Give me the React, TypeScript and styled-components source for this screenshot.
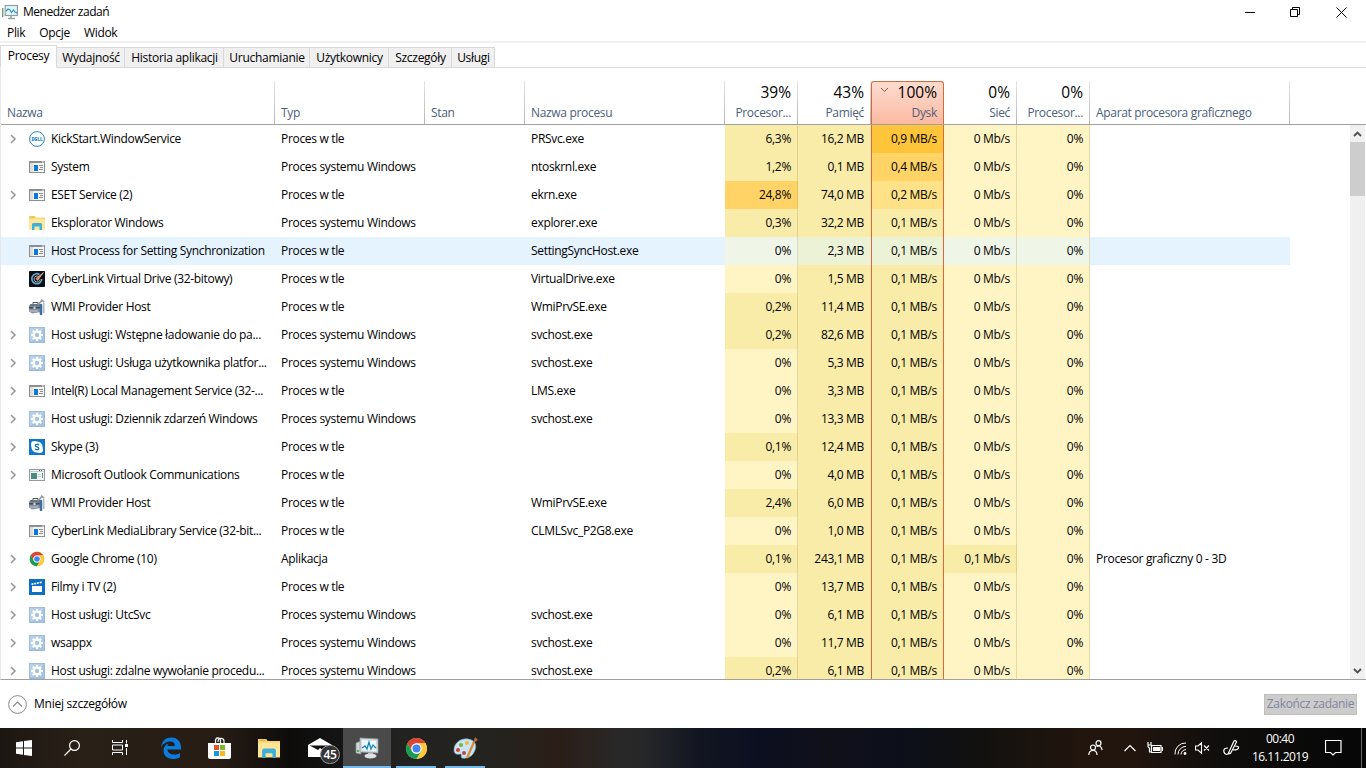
import React from 'react';
import styled, { createGlobalStyle, css } from 'styled-components';

const Global = createGlobalStyle`
  * { box-sizing: border-box; }
  html, body { margin: 0; padding: 0; }
  body {
    width: 1366px; height: 768px; overflow: hidden; background: #fff; color: #000;
    font: 12px/16px "Open Sans", "Noto Sans", sans-serif;
    letter-spacing: -0.32px;
  }
  svg { display: block; flex: none; }
`;

const Screen = styled.div`
  width: 1366px; height: 768px; display: flex; flex-direction: column; overflow: hidden;
`;
const TitleBar = styled.header`
  height: 24px; display: flex; align-items: center; padding-left: 2px;
`;
const Title = styled.span`margin-left: 5px; flex: 1; letter-spacing: -0.5px;`;
const WindowButton = styled.span`
  width: 46px; height: 21px; display: flex; align-items: center; justify-content: center;
  &:last-child { margin-right: 2px; }
`;
const MenuBar = styled.nav`
  height: 19px; display: flex; gap: 14px; padding: 1px 0 0 7px; border-bottom: 2px solid #f0f0f0;
`;
const Tabs = styled.div`
  height: 25px; display: flex; align-items: flex-end; padding-top: 2px;
  box-shadow: inset 0 -1px #dcdcdc; background: #fff;
`;
const Tab = styled.div<{ $w: number; $active?: boolean }>`
  width: ${p => p.$w}px; height: 21px; padding: 2px 0 0 1px; text-align: center; white-space: nowrap;
  background: #f0f0f0; border: 1px solid #d9d9d9; border-left: 0; letter-spacing: -0.28px;
  ${p => p.$active && css`
    height: 23px; background: #fff; border-left: 1px solid #d9d9d9; border-bottom-color: #fff; padding-left: 0;
  `}
`;
const Table = styled.section`
  height: 612px; display: flex; flex-direction: column; padding-left: 0;
  border-left: 1px solid #e8e8e8; border-bottom: 1px solid #a0a0a0;
`;
const COLUMNS = '274px 150px 100px 200px 73px 73px 73px 73px 73px 200px';
const Head = styled.div`
  height: 57px; flex: none; display: grid; grid-template-columns: ${COLUMNS};
  border-bottom: 1px solid #a0a0a0; padding-top: 13px;
`;
const HeadCell = styled.div<{ $num?: boolean; $hot?: boolean }>`
  position: relative; height: 43px; display: flex; flex-direction: column; justify-content: flex-end;
  padding: 0 6px 3px; color: #4c607a; text-align: ${p => (p.$num ? 'right' : 'left')};
  border-right: 1px solid; border-image: linear-gradient(#e6e6e6, #b4b4b4) 1;
  white-space: nowrap;
  ${p => p.$hot && css`
    background: linear-gradient(#fddcd0, #fcb9a1);
    border: 1px solid #d9683f; border-bottom: 0; border-image: none; border-radius: 3px 3px 0 0;
  `}
`;
const Total = styled.span`
  font-size: 15.5px; line-height: 20px; color: #000; margin-bottom: 3px; letter-spacing: 0;
`;
const SortMark = styled.svg`position: absolute; left: 8px; top: 5px;`;
const Body = styled.div`flex: 1; min-height: 0; display: flex; justify-content: space-between;`;
const Rows = styled.div`width: 1289px; overflow: hidden;`;
const Row = styled.div<{ $hover?: boolean }>`
  height: 28px; display: grid; grid-template-columns: ${COLUMNS};
  background: ${p => (p.$hover ? '#e5f3ff' : '#fff')};
`;
const Cell = styled.div`
  display: flex; align-items: center; padding: 0 6px; white-space: nowrap; overflow: hidden;
`;
const Chevron = styled.span`flex: none; width: 10px; height: 16px; display: flex; align-items: center; padding-left: 0;`;
const NameCell = styled(Cell)`padding-left: 8px; padding-right: 0;`;
const IconSlot = styled.span`flex: none; width: 16px; height: 16px; margin: 0 6px 0 10px;`;
const HEAT: Record<string, string> = {
  z: '#fff4c4', l: '#f9eca8', m: '#ffe187', h: '#ffd366', x: '#ffc53a', hz: '#eff5e7', hl: '#ecf2d5',
};
const Value = styled.div<{ $heat: string; $disk?: boolean; $flush?: boolean }>`
  display: flex; align-items: center; justify-content: flex-end; white-space: nowrap;
  padding-right: ${p => (p.$flush ? 7 : 6)}px; background-color: ${p => HEAT[p.$heat]};
  border-right: ${p => (p.$flush ? '0' : p.$disk ? '1px solid #d9683f' : '1px solid rgba(150,120,40,0.22)')};
  border-left: ${p => (p.$disk ? '1px solid #d9683f' : '0')};
`;
const ScrollBar = styled.div`
  width: 15px; height: 100%; background: #f0f0f0; margin-right: 1px;
  display: flex; flex-direction: column; align-items: center;
`;
const ScrollButton = styled.span`
  width: 15px; height: 17px; display: flex; align-items: center; justify-content: center;
`;
const Thumb = styled.span`width: 15px; height: 54px; background: #cdcdcd; margin-bottom: auto;`;
const Footer = styled.footer`
  height: 48px; display: flex; align-items: center; padding: 0 9px 0 8px; justify-content: space-between;
`;
const Fewer = styled.span`display: flex; align-items: center; gap: 7px; letter-spacing: -0.25px;`;
const EndTask = styled.button`
  width: 93px; height: 21px; padding: 0 0 1px; background: #ccc; border: 1px solid #bfbfbf; color: #838699;
  font: inherit; letter-spacing: -0.33px; white-space: nowrap;
`;
const TaskBar = styled.div`
  height: 40px; display: flex; align-items: stretch; color: #fff;
  background: linear-gradient(90deg, #1d1713 0, #292017 80px, #261c14 220px, #0d0c0b 290px, #151515 340px,
    #222221 400px, #24231f 490px, #2a1e17 560px, #292828 620px, #262729 645px, #111521 700px,
    #0c0f20 760px, #10101a 830px, #0c0f1a 900px, #12110f 980px, #21150d 1080px, #22150e 1130px, #100e0d 1220px, #060606 1366px);
`;
const TaskButton = styled.div<{ $w: number; $on?: boolean; $open?: boolean }>`
  width: ${p => p.$w}px; position: relative; display: flex; align-items: center; justify-content: center;
  ${p => p.$on && css`background: #4a4a4a; border-bottom: 2px solid #76b9ed; padding-top: 2px;`}
  ${p => p.$open && css`border-bottom: 2px solid #76b9ed; margin: 0 4px 0 5px; padding: 2px 0 0 0;`}
`;
const MailBadge = styled.span`
  position: absolute; right: 3px; top: 17px; width: 20px; height: 19px; border-radius: 10px;
  background: #333; border: 1px solid #999; font-size: 12px; line-height: 17px; text-align: center;
  font-weight: 600; letter-spacing: -0.4px;
`;
const Tray = styled.div`margin-left: auto; display: flex; align-items: center;`;
const TrayIcon = styled.span<{ $w: number }>`width: ${p => p.$w}px; display: flex; justify-content: center;`;
const Clock = styled.div`
  width: 70px; margin-right: 2px; text-align: center; line-height: 18px; letter-spacing: -0.5px; padding-bottom: 1px;
`;
const ShowDesktop = styled.span`width: 5px; height: 40px; border-left: 1px solid #666;`;

type IconName = 'dell' | 'app' | 'folder' | 'cyber' | 'wmi' | 'gear' | 'skype' | 'outlook' | 'chrome' | 'film';

const Chrome = ({ size }: { size: number }) => (
  <svg width={size} height={size} viewBox="0 0 24 24">
    <circle cx="12" cy="12" r="11" fill="#fbc93d" />
    <path d="M2.5 6.5A11 11 0 0 1 21.5 6.5H12A5.5 5.5 0 0 0 7.2 14.8Z" fill="#db4437" />
    <path d="M2.5 6.5A11 11 0 0 0 12 23L16.8 14.8A5.5 5.5 0 0 1 7.2 14.8Z" fill="#149c58" />
    <path d="M21.5 6.5A11 11 0 0 1 12 23L16.8 14.8A5.5 5.5 0 0 0 12 6.5Z" fill="#fbc93d" />
    <circle cx="12" cy="12" r="5.4" fill="#fff" />
    <circle cx="12" cy="12" r="4.2" fill="#4285f4" />
  </svg>
);
const Folder = ({ w, h }: { w: number; h: number }) => (
  <svg width={w} height={h} viewBox="0 0 16 14" preserveAspectRatio="none">
    <path d="M0 0H6L7 1.5H16V13.5H0Z" fill="#f8d775" />
    <path d="M1 1H5.5" stroke="#d9a93a" strokeWidth=".8" />
    <path d="M0 3H16V13.5H0Z" fill="#fde69a" />
    <path d="M3 14V8.5Q3 7 4.5 7H11.5Q13 7 13 8.5V14H10.5V10.5H5.5V14Z" fill="#3eafd9" />
  </svg>
);
const GEAR_TEETH = [0, 45, 90, 135, 180, 225, 270, 315];

function ProcessIcon({ name }: { name: IconName }) {
  const p = { width: 16, height: 16, viewBox: '0 0 16 16' };
  switch (name) {
    case 'dell':
      return (
        <svg {...p}>
          <circle cx="8" cy="8" r="7.4" fill="#fff" stroke="#2587bf" strokeWidth="1" />
          <text x="8" y="9.7" textAnchor="middle" fontSize="4.6" fontWeight="800" letterSpacing="0" textLength="11" lengthAdjust="spacingAndGlyphs" fill="#2587bf">DELL</text>
        </svg>
      );
    case 'app':
      return (
        <svg {...p}>
          <rect x=".5" y="2.5" width="15" height="11" fill="#f4f4f2" stroke="#8b8f91" />
          <path d="M0 3H16" stroke="#8b8f91" strokeWidth="2" />
          <path d="M13 3H15" stroke="#e8e8e8" />
          <rect x="1" y="4" width="3" height="9" fill="#dedede" />
          <rect x="5" y="6" width="4" height="6" fill="#0b78d7" />
          <path d="M10 6.5H14M11 8.5H14M10 10.5H14" stroke="#8b8f91" />
        </svg>
      );
    case 'outlook':
      return (
        <svg {...p}>
          <rect x=".5" y="2.5" width="15" height="11" fill="#f2f2f2" stroke="#989b9d" />
          <path d="M1 4.5H15" stroke="#c9cccf" />
          <path d="M10 3.5H14" stroke="#62676b" strokeDasharray="1 1" />
          <rect x="2" y="6" width="6" height="6" fill="#458d82" />
          <path d="M9 7.5H12M9 9.5H12" stroke="#ccc" />
          <path d="M13.5 6V11" stroke="#4a9c86" />
        </svg>
      );
    case 'folder':
      return <svg {...p}><g transform="translate(0 1)"><Folder w={16} h={14} /></g></svg>;
    case 'cyber':
      return (
        <svg {...p}>
          <rect width="16" height="16" rx="1" fill="#0c1015" />
          <path d="M10.5 3.5A5 5 0 1 0 12.8 8" fill="none" stroke="#6aa0c8" strokeWidth="1.7" />
          <path d="M9.6 5.4A3 3 0 1 0 11 8.5" fill="none" stroke="#d3dce4" strokeWidth=".8" />
          <path d="M14.5 1.5L7 7.4L8.6 9.5Z" fill="#f08444" stroke="#ffe9d9" strokeWidth=".5" />
        </svg>
      );
    case 'wmi':
      return (
        <svg {...p}>
          <path d="M4 5V3.5H9V5" fill="none" stroke="#4b5560" />
          <path d="M1.5 5H12V13L3 14.5L0 12.5V7.5Z" fill="#8592a0" />
          <path d="M1.5 5H11L12 7.5H0Z" fill="#6a7783" />
          <path d="M0 8.8H11" stroke="#35404b" strokeWidth="1.3" />
          <rect x="4.5" y="7.8" width="2" height="2.2" fill="#d3d9df" />
          <path d="M1 12H9" stroke="#b4bec8" strokeWidth="1.2" />
          <path d="M9 5.5L13.5 1.2M12 .7L15.2 3.2" stroke="#9a9c9b" strokeWidth="1.7" />
          <path d="M12 6V15" stroke="#3f6f9f" strokeWidth="2.6" strokeLinecap="round" />
          <path d="M14.8 4V14" stroke="#a3b3c4" strokeWidth="1.3" />
        </svg>
      );
    case 'gear':
      return (
        <svg {...p}>
          <rect width="16" height="16" fill="#b5d1ea" />
          <path d="M16 0V16H0Z" fill="#a4c4e1" />
          <rect x=".5" y=".5" width="15" height="15" fill="none" stroke="#98b8d6" strokeOpacity=".7" />
          <g stroke="#fff" strokeWidth="2.2">
            {GEAR_TEETH.map(a => <path key={a} d="M8 2V5" transform={`rotate(${a} 8 8)`} />)}
          </g>
          <circle cx="8" cy="8" r="3.3" fill="#a3c5e5" stroke="#fff" strokeWidth="2.2" />
        </svg>
      );
    case 'skype':
      return (
        <svg {...p}>
          <rect width="16" height="16" fill="#0f78cc" />
          <circle cx="8" cy="8" r="5.6" fill="#fff" /><circle cx="5.2" cy="5.2" r="3.2" fill="#fff" /><circle cx="10.8" cy="10.8" r="3.2" fill="#fff" />
          <path d="M10 6.2C9.2 4.8 6.3 5 6.3 6.6C6.3 8.3 9.8 7.6 9.8 9.4C9.8 11 6.7 11.2 6 9.7" fill="none" stroke="#0f78cc" strokeWidth="1.3" />
        </svg>
      );
    case 'chrome':
      return <Chrome size={16} />;
    default:
      return (
        <svg {...p}>
          <rect width="16" height="16" fill="#0d6fc4" />
          <path d="M3 7H13V13H3Z" fill="#fff" />
          <path d="M2.5 5.3L13 3.2" stroke="#fff" strokeWidth="1.6" strokeDasharray="2 .8" />
        </svg>
      );
  }
}

type Proc = {
  name: string; icon: IconName; open?: boolean; type: string; exe?: string;
  cpu: string; mem: string; disk?: string; heat?: string; net?: string; gpu?: string; hover?: boolean;
};
const TLE = 'Proces w tle';
const SYS = 'Proces systemu Windows';
const PROCESSES: Proc[] = [
  { name: 'KickStart.WindowService', icon: 'dell', open: true, type: TLE, exe: 'PRSvc.exe', cpu: '6,3%', mem: '16,2 MB', disk: '0,9 MB/s', heat: 'x' },
  { name: 'System', icon: 'app', type: SYS, exe: 'ntoskrnl.exe', cpu: '1,2%', mem: '0,1 MB', disk: '0,4 MB/s', heat: 'h' },
  { name: 'ESET Service (2)', icon: 'app', open: true, type: TLE, exe: 'ekrn.exe', cpu: '24,8%', mem: '74,0 MB', disk: '0,2 MB/s', heat: 'm' },
  { name: 'Eksplorator Windows', icon: 'folder', type: SYS, exe: 'explorer.exe', cpu: '0,3%', mem: '32,2 MB' },
  { name: 'Host Process for Setting Synchronization', icon: 'app', type: TLE, exe: 'SettingSyncHost.exe', cpu: '0%', mem: '2,3 MB', hover: true },
  { name: 'CyberLink Virtual Drive (32-bitowy)', icon: 'cyber', type: TLE, exe: 'VirtualDrive.exe', cpu: '0%', mem: '1,5 MB' },
  { name: 'WMI Provider Host', icon: 'wmi', type: TLE, exe: 'WmiPrvSE.exe', cpu: '0,2%', mem: '11,4 MB' },
  { name: 'Host usługi: Wstępne ładowanie do pa...', icon: 'gear', open: true, type: SYS, exe: 'svchost.exe', cpu: '0,2%', mem: '82,6 MB' },
  { name: 'Host usługi: Usługa użytkownika platfor...', icon: 'gear', open: true, type: SYS, exe: 'svchost.exe', cpu: '0%', mem: '5,3 MB' },
  { name: 'Intel(R) Local Management Service (32-...', icon: 'app', open: true, type: TLE, exe: 'LMS.exe', cpu: '0%', mem: '3,3 MB' },
  { name: 'Host usługi: Dziennik zdarzeń Windows', icon: 'gear', open: true, type: SYS, exe: 'svchost.exe', cpu: '0%', mem: '13,3 MB' },
  { name: 'Skype (3)', icon: 'skype', open: true, type: TLE, cpu: '0,1%', mem: '12,4 MB' },
  { name: 'Microsoft Outlook Communications', icon: 'outlook', open: true, type: TLE, cpu: '0%', mem: '4,0 MB' },
  { name: 'WMI Provider Host', icon: 'wmi', type: TLE, exe: 'WmiPrvSE.exe', cpu: '2,4%', mem: '6,0 MB' },
  { name: 'CyberLink MediaLibrary Service (32-bit...', icon: 'app', type: TLE, exe: 'CLMLSvc_P2G8.exe', cpu: '0%', mem: '1,0 MB' },
  { name: 'Google Chrome (10)', icon: 'chrome', open: true, type: 'Aplikacja', cpu: '0,1%', mem: '243,1 MB', net: '0,1 Mb/s', gpu: 'Procesor graficzny 0 - 3D' },
  { name: 'Filmy i TV (2)', icon: 'film', open: true, type: TLE, cpu: '0%', mem: '13,7 MB' },
  { name: 'Host usługi: UtcSvc', icon: 'gear', open: true, type: SYS, exe: 'svchost.exe', cpu: '0%', mem: '6,1 MB' },
  { name: 'wsappx', icon: 'gear', open: true, type: SYS, exe: 'svchost.exe', cpu: '0%', mem: '11,7 MB' },
  { name: 'Host usługi: zdalne wywołanie procedu...', icon: 'gear', open: true, type: SYS, exe: 'svchost.exe', cpu: '0,2%', mem: '6,1 MB' },
];

const TABS: [string, number][] = [
  ['Procesy', 57], ['Wydajność', 68], ['Historia aplikacji', 99], ['Uruchamianie', 86],
  ['Użytkownicy', 79], ['Szczegóły', 63], ['Usługi', 43],
];

function ProcessRow({ p }: { p: Proc }) {
  const h = p.hover ? 'h' : '';
  const cpuHeat = p.cpu === '24,8%' ? 'h' : p.cpu === '0%' ? h + 'z' : 'l';
  return (
    <Row $hover={p.hover}>
      <NameCell>
        <Chevron>
          {p.open && <svg width="8" height="10" viewBox="0 0 8 10"><path d="M2 1L6 5L2 9" fill="none" stroke="#999" strokeWidth="1.6" /></svg>}
        </Chevron>
        <IconSlot><ProcessIcon name={p.icon} /></IconSlot>
        {p.name}
      </NameCell>
      <Cell>{p.type}</Cell>
      <Cell />
      <Cell>{p.exe}</Cell>
      <Value $heat={cpuHeat}>{p.cpu}</Value>
      <Value $heat={h + 'l'} $flush>{p.mem}</Value>
      <Value $heat={p.heat ?? h + 'l'} $disk>{p.disk ?? '0,1 MB/s'}</Value>
      <Value $heat={p.net ? 'l' : h + 'z'}>{p.net ?? '0 Mb/s'}</Value>
      <Value $heat={h + 'z'}>0%</Value>
      <Cell>{p.gpu}</Cell>
    </Row>
  );
}

const Monitor = ({ w, h }: { w: number; h: number }) => (
  <svg width={w} height={h} viewBox="0 0 24 22" preserveAspectRatio="none">
    <path d="M1 6L6 4V17L1 16Z" fill="#d2d6d5" stroke="#8d9695" strokeWidth=".7" />
    <path d="M2 14H4" stroke="#58a764" strokeWidth="2" />
    <path d="M13 15H18V18H13Z" fill="#b4baba" />
    <ellipse cx="15.5" cy="19" rx="6" ry="2.4" fill="#dfe2e2" />
    <path d="M5 1L23 2V16L5 15Z" fill="#d7dcdc" stroke="#939b9c" strokeWidth=".8" />
    <path d="M7 3L21 4V14L7 13Z" fill="#ecf8fd" />
    <path d="M7 11L10 9L12 12L14 5L16 12L18 8L21 11" fill="none" stroke="#1686bd" strokeWidth="1.3" />
  </svg>
);

const stroke = { fill: 'none', stroke: '#fff', strokeWidth: 1.2 };

export default function App() {
  return (
    <Screen>
      <Global />
      <TitleBar>
        <svg width="16" height="16" viewBox="0 0 16 16">
          <path d="M.7 4V13" stroke="#6b9c75" strokeWidth="1.4" />
          <rect x="3.2" y="1.5" width="12.2" height="10" fill="#e2f5fd" stroke="#969c9e" strokeWidth="1.2" />
          <path d="M4 7L6 5L8 6L9.5 8.5L11.5 6L13 8L15 9" fill="none" stroke="#2596c1" strokeWidth="1.1" />
          <path d="M9 12V14M6 14.5H13" stroke="#9a9f9f" strokeWidth="1.4" />
        </svg>
        <Title>Menedżer zadań</Title>
        <WindowButton><svg width="11" height="10"><path d="M1 5.5H11" stroke="#000" /></svg></WindowButton>
        <WindowButton>
          <svg width="10" height="10"><path d="M.5 2.5H7.5V9.5H.5ZM2.5 2.5V.5H9.5V7.5H7.5" fill="none" stroke="#000" /></svg>
        </WindowButton>
        <WindowButton><svg width="11" height="11"><path d="M.5 .5L10.5 10.5M10.5 .5L.5 10.5" stroke="#000" /></svg></WindowButton>
      </TitleBar>
      <MenuBar><span>Plik</span><span>Opcje</span><span>Widok</span></MenuBar>
      <Tabs>{TABS.map(([t, w], i) => <Tab key={t} $w={w} $active={i === 0}>{t}</Tab>)}</Tabs>
      <Table>
        <Head>
          <HeadCell>Nazwa</HeadCell>
          <HeadCell>Typ</HeadCell>
          <HeadCell>Stan</HeadCell>
          <HeadCell>Nazwa procesu</HeadCell>
          <HeadCell $num><Total>39%</Total>Procesor...</HeadCell>
          <HeadCell $num><Total>43%</Total>Pamięć</HeadCell>
          <HeadCell $num $hot>
            <SortMark width="9" height="6"><path d="M1 1L4.5 4.5L8 1" fill="none" stroke="#8b5c4c" /></SortMark>
            <Total>100%</Total>Dysk
          </HeadCell>
          <HeadCell $num><Total>0%</Total>Sieć</HeadCell>
          <HeadCell $num><Total>0%</Total>Procesor...</HeadCell>
          <HeadCell>Aparat procesora graficznego</HeadCell>
        </Head>
        <Body>
          <Rows>{PROCESSES.map((p, i) => <ProcessRow key={i} p={p} />)}</Rows>
          <ScrollBar>
            <ScrollButton><svg width="9" height="6"><path d="M1 5L4.5 1.5L8 5" fill="none" stroke="#505050" strokeWidth="1.9" /></svg></ScrollButton>
            <Thumb />
            <ScrollButton><svg width="9" height="6"><path d="M1 1L4.5 4.5L8 1" fill="none" stroke="#505050" strokeWidth="1.9" /></svg></ScrollButton>
          </ScrollBar>
        </Body>
      </Table>
      <Footer>
        <Fewer>
          <svg width="19" height="19">
            <circle cx="9.5" cy="9.5" r="8.9" fill="#fff" stroke="#8a8a8a" />
            <path d="M5 11.5L9.5 7L14 11.5" fill="none" stroke="#8a8a8a" strokeWidth="1.2" />
          </svg>
          Mniej szczegółów
        </Fewer>
        <EndTask>Zakończ zadanie</EndTask>
      </Footer>
      <TaskBar>
        <TaskButton $w={48}>
          <svg width="16" height="16"><path d="M0 2.2L7 1.2V7.5H0ZM8 1L16 0V7.5H8ZM0 8.5H7V14.8L0 13.8ZM8 8.5H16V16L8 15Z" fill="#fff" /></svg>
        </TaskButton>
        <TaskButton $w={48}>
          <svg width="16" height="16"><circle cx="10.5" cy="5.5" r="4.9" {...stroke} /><path d="M7 9L.5 15.5" {...stroke} /></svg>
        </TaskButton>
        <TaskButton $w={48}>
          <svg width="16" height="16">
            <path d="M.5 0V2.5H10.5V0M.5 15V12.5H10.5V15M.5 5H10.5V10H.5ZM14.5 0V3.5M14.5 8V15" {...stroke} strokeWidth="1" />
            <rect x="13" y="4" width="3" height="3" fill="#fff" />
          </svg>
        </TaskButton>
        <TaskButton $w={54}>
          <svg width="20" height="22" viewBox="0 0 20 22">
            <path d="M0 10C1 3.5 5 .5 10.5 .5C16.5 .5 20 5 20 10V12.6H6.5C6.8 16 9.5 17.6 13 17.6C15.5 17.6 17.5 17 19 16V20.2C17 21.3 14.7 22 12 22C6 22 2.5 18.5 2.5 13.6C2.5 10.5 4.3 7.7 7.5 6.3C6.8 7.2 6.5 8.2 6.4 9H13.8C13.8 6 12.3 4.6 9.3 4.6C5.6 4.6 2.3 6.6 0 10Z" fill="#0b7bdc" />
          </svg>
        </TaskButton>
        <TaskButton $w={43}>
          <svg width="23" height="23" viewBox="0 0 23 23">
            <path d="M7.5 6V4C7.5 0 12 0 12.5 3V6M10 5C10 0 16 .5 16 4V6" {...stroke} />
            <path d="M0 6H23V20Q23 22 21 22H2Q0 22 0 20Z" fill="#fff" />
            <path d="M6 8H11V13H6Z" fill="#e95325" /><path d="M12 8H17V13H12Z" fill="#7db82c" />
            <path d="M6 14H11V19H6Z" fill="#139cdb" /><path d="M12 14H17V19H12Z" fill="#f9b91a" />
          </svg>
        </TaskButton>
        <TaskButton $w={55}><Folder w={22} h={19} /></TaskButton>
        <TaskButton $w={47}>
          <svg width="24" height="20" viewBox="0 0 24 20"><path d="M0 7L12 0L24 7V19H0Z" fill="#fff" /><path d="M1.5 7.5H22.5L15 12L12 10L10 12Z" fill="#111" /></svg>
          <MailBadge>45</MailBadge>
        </TaskButton>
        <TaskButton $w={48} $on><Monitor w={24} h={22} /></TaskButton>
        <TaskButton $w={40} $open><Chrome size={23} /></TaskButton>
        <TaskButton $w={40} $open>
          <svg width="25" height="23" viewBox="0 0 25 23">
            <path d="M1 13C1 6 8 1 15 2C22 3 24 8 22 13C20 19 15 22 9 21C7 20 10 17 7 17C4 18 1 17 1 13Z" fill="#c9e5f4" stroke="#7ca7bd" strokeWidth=".7" />
            <circle cx="5" cy="13" r="2" fill="#d9432f" /><circle cx="8" cy="8" r="2" fill="#79b53b" />
            <circle cx="14" cy="6" r="2" fill="#eeb72f" /><circle cx="11" cy="16" r="2" fill="#b54746" />
            <path d="M14 21L21 5" stroke="#d58b3c" strokeWidth="2.2" /><path d="M20 6L22 0L25 3Z" fill="#ad6b3c" />
          </svg>
        </TaskButton>
        <Tray>
          <TrayIcon $w={56}>
            <svg width="15" height="16" viewBox="0 0 15 16"><circle cx="5" cy="7.5" r="2.5" {...stroke} /><circle cx="10.5" cy="3.2" r="2.5" {...stroke} /><path d="M.8 15Q1 10.5 5 10.5T9 15M8.5 6.5Q10 5.7 11.5 6T14.2 10" {...stroke} /></svg>
          </TrayIcon>
          <TrayIcon $w={14}><svg width="12" height="8"><path d="M.5 7L6 1.5L11.5 7" {...stroke} /></svg></TrayIcon>
          <TrayIcon $w={36}>
            <svg width="16" height="12"><path d="M4.5 3.5H14V10.5H4.5ZM15.5 5V9M.5 3H4.5M1 0V3M4 0V3M1 3Q1 6 2.5 6V10H4" {...stroke} /><rect x="6" y="5" width="7" height="4" fill="#fff" /></svg>
          </TrayIcon>
          <TrayIcon $w={14}>
            <svg width="13" height="13"><circle cx="11" cy="11.5" r="1.4" fill="#fff" /><path d="M1 12.5A10.5 10.5 0 0 1 12 1M4 12.5A8 8 0 0 1 12 4.4M7 12.5A5 5 0 0 1 12 7.6" {...stroke} strokeWidth="1" /></svg>
          </TrayIcon>
          <TrayIcon $w={30}>
            <svg width="15" height="12"><path d="M.5 4H3L6.5 .8V11.2L3 8H.5ZM9 3.5L14 8.5M14 3.5L9 8.5" {...stroke} strokeWidth="1.1" /></svg>
          </TrayIcon>
          <TrayIcon $w={28}>
            <svg width="17" height="16"><path d="M5 14L11 1Q13 0 13.5 2L7.5 13.5ZM5 8Q0 8 1 12T7 13M12 6Q16 6 15.5 8T10 10" {...stroke} /></svg>
          </TrayIcon>
          <Clock>00:40<br />16.11.2019</Clock>
          <TrayIcon $w={32}>
            <svg width="17" height="16"><path d="M.5 .5H16V12.5H10.5L8 15L5.5 12.5H.5Z" {...stroke} /></svg>
          </TrayIcon>
          <TrayIcon $w={12} />
          <ShowDesktop />
        </Tray>
      </TaskBar>
    </Screen>
  );
}
